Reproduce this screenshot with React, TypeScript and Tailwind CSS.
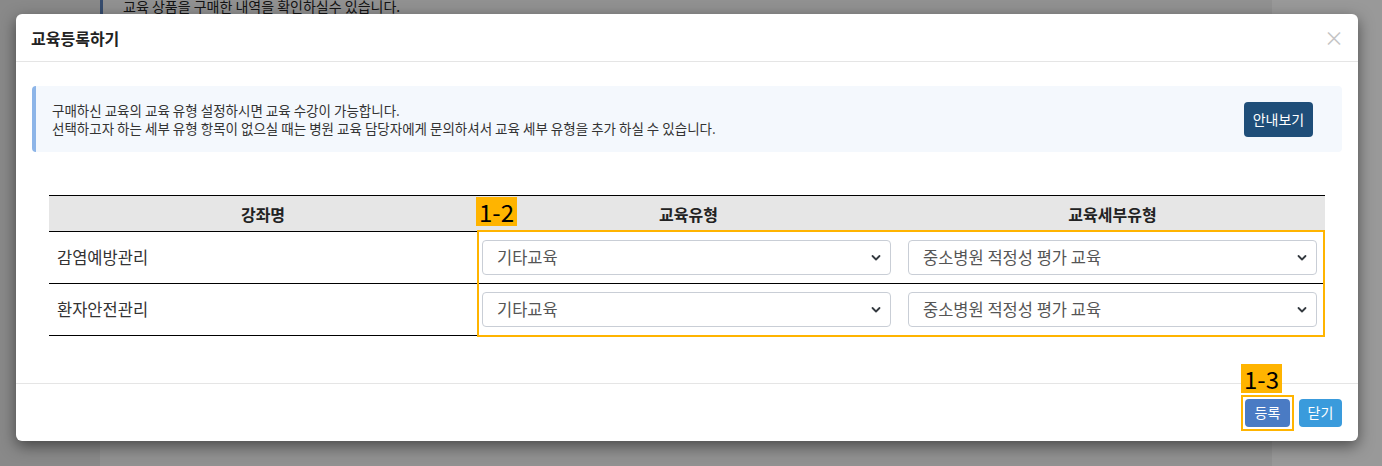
import React, { useState } from 'react';

const font = { fontFamily: '"Noto Sans CJK KR", "Noto Sans", sans-serif' };

const typeOptions = ['기타교육', '법정의무교육', '직무교육'];
const detailOptions = ['중소병원 적정성 평가 교육', '감염관리 교육', '환자안전 교육'];

const Chevron = () => (
  <svg className="pointer-events-none absolute right-[10px] top-1/2 -translate-y-1/2" width="10" height="7" viewBox="0 0 10 7" fill="none">
    <path d="M1.5 1.5 5 5l3.5-3.5" stroke="#343a40" strokeWidth="1.8" strokeLinecap="round" strokeLinejoin="round" />
  </svg>
);

const Select: React.FC<{ value: string; options: string[]; onChange: (v: string) => void }> = ({ value, options, onChange }) => (
  <div className="relative">
    <select
      value={value}
      onChange={(e) => onChange(e.target.value)}
      className="h-[35px] w-full appearance-none rounded-[4px] border border-[#c9ced6] bg-white pl-[14px] pr-8 text-[16.5px] text-[#555] outline-none"
    >
      {options.map((o) => (
        <option key={o} value={o}>{o}</option>
      ))}
    </select>
    <Chevron />
  </div>
);

const Badge: React.FC<{ label: string; className?: string }> = ({ label, className = '' }) => (
  <span className={`absolute bg-[#ffb400] px-[3px] text-[24px] leading-[29px] text-black ${className}`}>{label}</span>
);

export default function App() {
  const [rows, setRows] = useState([
    { name: '감염예방관리', type: '기타교육', detail: '중소병원 적정성 평가 교육' },
    { name: '환자안전관리', type: '기타교육', detail: '중소병원 적정성 평가 교육' },
  ]);

  const update = (i: number, key: 'type' | 'detail', v: string) =>
    setRows(rows.map((r, idx) => (idx === i ? { ...r, [key]: v } : r)));

  return (
    <div className="relative h-[466px] w-[1382px] overflow-hidden bg-white" style={font}>
      {/* page behind the modal */}
      <div className="flex h-full">
        <div className="w-[100px] bg-[#e4e4e4]" />
        <div className="flex w-[1172px] flex-col">
          <div className="h-[16px] border-l-[3px] border-[#5b7fb8] bg-[#f2f2f2] pl-[20px] text-[14px] leading-[12px] text-[#222]">
            교육 상품을 구매한 내역을 확인하실수 있습니다.
          </div>
          <div className="flex-1 bg-[#f2f2f2]" />
        </div>
        <div className="flex-1 bg-white" />
      </div>

      {/* overlay */}
      <div className="absolute inset-0 bg-black/40 pl-[16px] pt-[14px]">
        <div className="w-[1342px] rounded-[6px] bg-white shadow-[0_5px_15px_rgba(0,0,0,0.5)]">
          {/* header */}
          <div className="flex h-[48px] items-center justify-between border-b border-[#e5e5e5] pl-[15px] pr-[14px]">
            <h4 className="text-[16px] font-bold text-[#222]">교육등록하기</h4>
            <button className="text-[20px] leading-none text-[#c4c4c4]">×</button>
          </div>

          {/* body */}
          <div className="px-4 pb-[47px] pt-[24px]">
            <div className="flex h-[66px] items-center justify-between rounded-[4px] border-l-4 border-[#8db5e8] bg-[#f4f8fd] pl-4 pr-[29px]">
              <p className="text-[13.5px] leading-[18px] text-[#333]">
                구매하신 교육의 교육 유형 설정하시면 교육 수강이 가능합니다.
                <br />
                선택하고자 하는 세부 유형 항목이 없으실 때는 병원 교육 담당자에게 문의하셔서 교육 세부 유형을 추가 하실 수 있습니다.
              </p>
              <button className="h-[35px] w-[69px] rounded-[4px] bg-[#1f4e79] text-[14px] text-white">안내보기</button>
            </div>

            <div className="relative mx-[17px] mt-[43px]">
              <table className="w-full table-fixed border-collapse text-[16.5px] text-[#333]">
                <colgroup>
                  <col className="w-[428px]" />
                  <col className="w-[423px]" />
                  <col />
                </colgroup>
                <thead>
                  <tr className="h-[36px] border-y border-black bg-[#e6e6e6] text-[16px]">
                    <th className="font-bold text-[#222]">강좌명</th>
                    <th className="font-bold text-[#222]">교육유형</th>
                    <th className="font-bold text-[#222]">교육세부유형</th>
                  </tr>
                </thead>
                <tbody>
                  {rows.map((r, i) => (
                    <tr key={r.name} className="h-[52px] border-b border-black">
                      <td className="pl-[8px]">{r.name}</td>
                      <td className="pl-[5px] pr-[9px]">
                        <Select value={r.type} options={typeOptions} onChange={(v) => update(i, 'type', v)} />
                      </td>
                      <td className="px-[8px]">
                        <Select value={r.detail} options={detailOptions} onChange={(v) => update(i, 'detail', v)} />
                      </td>
                    </tr>
                  ))}
                </tbody>
              </table>
              <div className="pointer-events-none absolute bottom-[-1px] left-[428px] right-0 top-[35px] border-2 border-[#ffb400]" />
              <Badge label="1-2" className="left-[427px] top-[2px]" />
            </div>
          </div>

          {/* footer */}
          <div className="flex h-[58px] items-center justify-end gap-[5px] border-t border-[#e5e5e5] pr-4">
            <div className="relative border-2 border-[#ffb400] p-[2px]">
              <Badge label="1-3" className="left-[-2px] top-[-33px]" />
              <button className="h-[28px] w-[45px] rounded-[4px] bg-[#4a7bc4] text-[14px] text-white">등록</button>
            </div>
            <button className="h-[28px] w-[43px] rounded-[4px] bg-[#3a9bdc] text-[14px] text-white">닫기</button>
          </div>
        </div>
      </div>
    </div>
  );
}
